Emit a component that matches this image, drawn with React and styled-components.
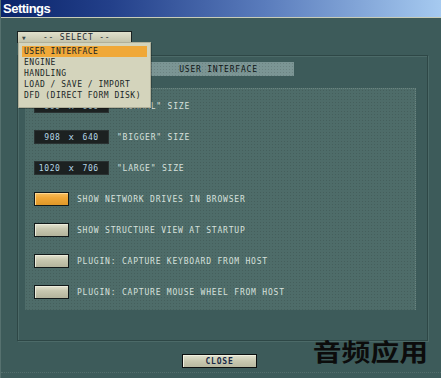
import styled, { createGlobalStyle } from "styled-components";

const Global = createGlobalStyle`
  html,body{margin:0;padding:0;background:#3d5b5a;}
  *{box-sizing:border-box;}
`;

const pixel = `font-family:"DejaVu Sans Mono","Liberation Mono",monospace;font-size:8px;letter-spacing:.8px;text-transform:uppercase;white-space:nowrap;`;
const dots = `background-image:radial-gradient(rgba(0,0,0,.12) .6px,transparent .9px);background-size:3px 3px;`;

const Window = styled.div`
  position:relative;width:441px;height:378px;overflow:hidden;
  background:#3d5b5a;border-left:1px solid #56716f;
  display:flex;flex-direction:column;
`;
const TitleBar = styled.div`
  height:18px;flex:none;padding:0 0 0 2px;display:flex;align-items:center;
  background:linear-gradient(90deg,#0a246a 0%,#23408a 25%,#5a7cbc 60%,#a6caf0 100%);
  border-bottom:1px solid #c8ccb8;
  color:#fff;font:bold 13px "Liberation Sans",Arial,sans-serif;letter-spacing:-.5px;
`;
const Body = styled.div`
  position:relative;flex:1;display:flex;flex-direction:column;padding:13px 14px 0 16px;
`;
const SelectBtn = styled.div`
  width:115px;height:12px;display:flex;align-items:center;padding:0 4px;
  background:linear-gradient(#e0e0cc,#c4c4ac);border:1px solid #1a2222;
  ${pixel};color:#1c2a30;
  span{flex:1;text-align:center;}
  i{font-style:normal;font-size:6px;color:#3a4848;}
`;
const Menu = styled.div`
  position:absolute;left:17px;top:24px;width:133px;height:66px;z-index:2;
  background:#d4d4bc;border:1px solid #b0b09a;padding:3px 3px 0 3px;
  box-shadow:1px 1px 0 rgba(0,0,0,.25);
`;
const MenuItem = styled.div`
  height:11px;line-height:11px;padding-left:2px;${pixel};letter-spacing:.5px;color:#1a2626;
  background:${p => p.$active ? "#f0a838" : "transparent"};
`;
const Group = styled.div`
  margin-top:12px;width:411px;height:286px;
  border:1px solid #2e4746;box-shadow:inset 1px 1px 0 #4c6a68, 1px 1px 0 #4c6a68;
  display:flex;flex-direction:column;padding:6px 11px 30px 7px;
`;
const Tab = styled.div`
  align-self:center;margin-left:-4px;width:150px;height:14px;
  background:#7b9594;${dots};
  display:flex;align-items:center;justify-content:center;${pixel};color:#0e1414;
`;
const Panel = styled.div`
  margin-top:12px;flex:1;background-color:#4e6c69;${dots};
  border-top:1px dotted #6b8480;border-right:1px dotted #6b8480;
  display:flex;flex-direction:column;gap:17px;padding:10px 0 0 9px;
`;
const Row = styled.div`
  display:flex;align-items:center;gap:8px;height:14px;
`;
const SizeBox = styled.div`
  width:75px;height:14px;background:#1c2121;border:1px solid #2a3232;
  display:grid;grid-template-columns:1fr 22px 1fr;align-items:center;
  ${pixel};color:#b4d6e6;letter-spacing:.6px;
  .w{text-align:right;}
  .x{text-align:center;font-size:9px;text-transform:none;}
  .h{text-align:left;}
`;
const Check = styled.div`
  width:35px;height:14px;border:1px solid #121a1a;
  background:${p => p.$on ? "linear-gradient(#f8c060,#f0a838 40%,#e09828)" : "linear-gradient(#e4e4d0,#c8c8b0 40%,#b4b49c)"};
  box-shadow:inset 1px 1px 0 ${p => p.$on ? "#ffd890" : "#ececdc"};
`;
const Label = styled.span`
  ${pixel};color:#d6e0dc;
`;
const Footer = styled.div`
  display:flex;justify-content:center;padding-top:13px;padding-right:5px;
`;
const CloseBtn = styled.div`
  width:75px;height:14px;border:1px solid #0c1010;
  background:linear-gradient(#e2e2ce,#c8c8b0 50%,#b8b8a0);
  box-shadow:inset 1px 1px 0 #f0f0e0;
  display:flex;align-items:center;justify-content:center;
  ${pixel};font-weight:bold;color:#1a2a48;
`;
const Watermark = styled.div`
  position:absolute;right:13px;bottom:10px;line-height:1;
  font:bold 24px "Noto Sans CJK SC",sans-serif;color:#0c0c0c;
  transform:scaleX(1.2);transform-origin:right center;
`;
const BottomDots = styled.div`
  position:absolute;left:0;right:0;bottom:5px;height:1px;
  border-top:1px dotted #536e6c;
`;

const sizes = [
  ["800", "600", "\"NORMAL\" SIZE"],
  ["908", "640", "\"BIGGER\" SIZE"],
  ["1020", "706", "\"LARGE\" SIZE"],
];
const checks = [
  ["SHOW NETWORK DRIVES IN BROWSER", true],
  ["SHOW STRUCTURE VIEW AT STARTUP", false],
  ["PLUGIN: CAPTURE KEYBOARD FROM HOST", false],
  ["PLUGIN: CAPTURE MOUSE WHEEL FROM HOST", false],
];
const menu = ["USER INTERFACE", "ENGINE", "HANDLING", "LOAD / SAVE / IMPORT", "DFD (DIRECT FORM DISK)"];

export default function App() {
  return (
    <>
      <Global />
      <Window>
        <TitleBar>Settings</TitleBar>
        <Body>
          <SelectBtn><i>▼</i><span>-- SELECT --</span></SelectBtn>
          <Menu>
            {menu.map((m, i) => <MenuItem key={m} $active={i === 0}>{m}</MenuItem>)}
          </Menu>
          <Group>
            <Tab>USER INTERFACE</Tab>
            <Panel>
              {sizes.map(([w, h, l]) => (
                <Row key={l}>
                  <SizeBox><span className="w">{w}</span><span className="x">x</span><span className="h">{h}</span></SizeBox>
                  <Label>{l}</Label>
                </Row>
              ))}
              {checks.map(([l, on]) => (
                <Row key={l}>
                  <Check $on={on} />
                  <Label>{l}</Label>
                </Row>
              ))}
            </Panel>
          </Group>
          <Footer><CloseBtn>CLOSE</CloseBtn></Footer>
          <Watermark>音频应用</Watermark>
        </Body>
        <BottomDots />
      </Window>
    </>
  );
}
